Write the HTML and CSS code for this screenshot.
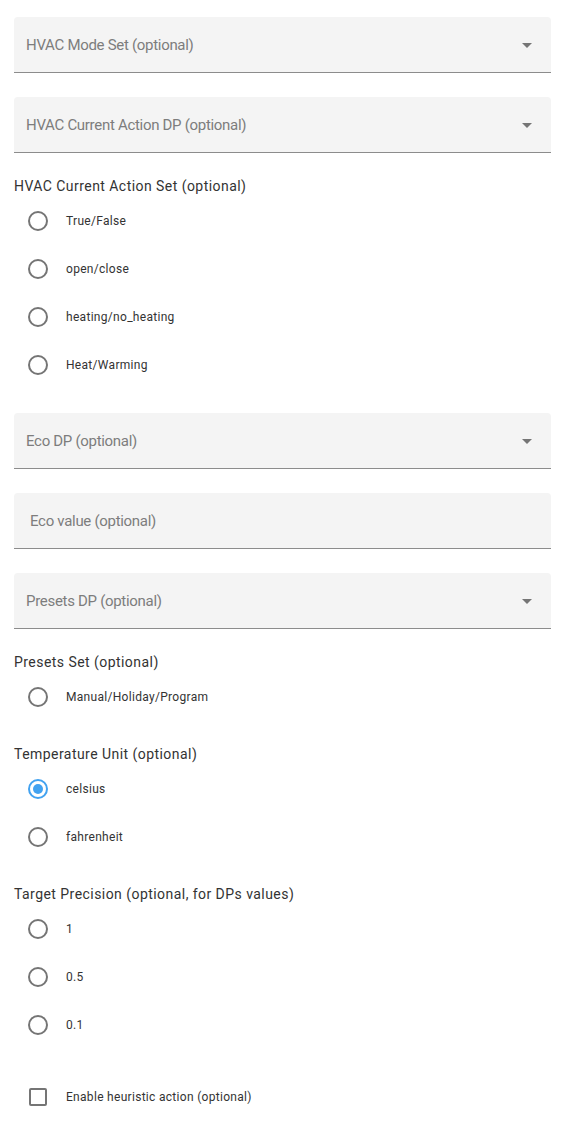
FILE: index.html
```html
<!DOCTYPE html>
<html>
<head>
<meta charset="utf-8">
<link rel="stylesheet" href="styles.css">
</head>
<body>
<div class="form">
  <div class="field select">
    <span class="field-label">HVAC Mode Set (optional)</span>
    <span class="arrow"></span>
  </div>
  <div class="field select">
    <span class="field-label">HVAC Current Action DP (optional)</span>
    <span class="arrow"></span>
  </div>
  <div class="group">
    <div class="group-label">HVAC Current Action Set (optional)</div>
    <div class="option"><span class="ctl"><span class="radio"></span></span><span class="opt-label">True/False</span></div>
    <div class="option"><span class="ctl"><span class="radio"></span></span><span class="opt-label">open/close</span></div>
    <div class="option"><span class="ctl"><span class="radio"></span></span><span class="opt-label">heating/no_heating</span></div>
    <div class="option"><span class="ctl"><span class="radio"></span></span><span class="opt-label">Heat/Warming</span></div>
  </div>
  <div class="field select">
    <span class="field-label">Eco DP (optional)</span>
    <span class="arrow"></span>
  </div>
  <div class="field text">
    <span class="field-label">Eco value (optional)</span>
  </div>
  <div class="field select">
    <span class="field-label">Presets DP (optional)</span>
    <span class="arrow"></span>
  </div>
  <div class="group">
    <div class="group-label">Presets Set (optional)</div>
    <div class="option"><span class="ctl"><span class="radio"></span></span><span class="opt-label">Manual/Holiday/Program</span></div>
  </div>
  <div class="group">
    <div class="group-label">Temperature Unit (optional)</div>
    <div class="option"><span class="ctl"><span class="radio checked"></span></span><span class="opt-label">celsius</span></div>
    <div class="option"><span class="ctl"><span class="radio"></span></span><span class="opt-label">fahrenheit</span></div>
  </div>
  <div class="group">
    <div class="group-label">Target Precision (optional, for DPs values)</div>
    <div class="option"><span class="ctl"><span class="radio"></span></span><span class="opt-label">1</span></div>
    <div class="option"><span class="ctl"><span class="radio"></span></span><span class="opt-label">0.5</span></div>
    <div class="option"><span class="ctl"><span class="radio"></span></span><span class="opt-label">0.1</span></div>
  </div>
  <div class="option">
    <span class="ctl"><span class="checkbox"></span></span><span class="opt-label">Enable heuristic action (optional)</span>
  </div>
</div>
</body>
</html>
```
FILE: styles.css
```css
html, body {
  margin: 0;
  padding: 0;
  background: #ffffff;
}
body {
  font-family: Roboto, "Noto Sans", sans-serif;
  color: rgba(0, 0, 0, 0.87);
}
.form {
  display: flex;
  flex-direction: column;
  gap: 24px;
  padding: 17px 21px 0 14px;
}
.field {
  height: 55px;
  background: #f4f4f4;
  border-bottom: 1px solid #8c8c8c;
  border-radius: 4px 4px 0 0;
  display: flex;
  align-items: center;
  justify-content: space-between;
  padding: 0 19px 0 12px;
}
.field.text {
  padding-left: 16px;
}
.field-label {
  font-size: 15px;
  color: #7d7d7d;
  letter-spacing: -0.3px;
}
.arrow {
  width: 0;
  height: 0;
  border-left: 5px solid transparent;
  border-right: 5px solid transparent;
  border-top: 5px solid #757575;
  margin-top: 1px;
}
.group {
  display: flex;
  flex-direction: column;
}
.group-label {
  font-size: 14px;
  line-height: 21px;
  margin-top: -1px;
  color: #333333;
  letter-spacing: 0.45px;
}
.option {
  display: flex;
  align-items: center;
  height: 48px;
}
.ctl {
  width: 48px;
  height: 48px;
  display: flex;
  align-items: center;
  justify-content: center;
  flex: none;
}
.radio {
  width: 20px;
  height: 20px;
  box-sizing: border-box;
  border: 2px solid #757575;
  border-radius: 50%;
  display: flex;
  align-items: center;
  justify-content: center;
}
.radio.checked {
  border-color: #42a2f0;
}
.radio.checked::after {
  content: "";
  width: 10px;
  height: 10px;
  border-radius: 50%;
  background: #42a2f0;
}
.checkbox {
  width: 18px;
  height: 18px;
  box-sizing: border-box;
  border: 2px solid #757575;
  border-radius: 2px;
}
.opt-label {
  padding-left: 4px;
  font-size: 12px;
  color: #333333;
  letter-spacing: 0.3px;
}
```
